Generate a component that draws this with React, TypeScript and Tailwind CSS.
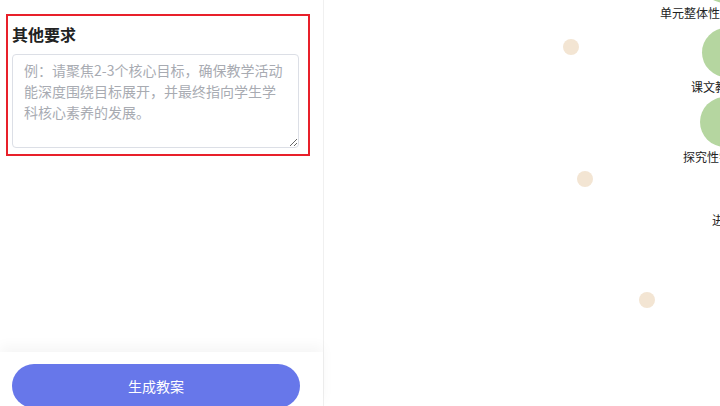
const nodes = [
  { cx: 401, cy: -22, r: 25 },
  { cx: 402.5, cy: 52.5, r: 24.5 },
  { cx: 401, cy: 122, r: 25 },
];

const labels = [
  { x: 336, y: 18, text: "单元整体性教学设计" },
  { x: 367, y: 92, text: "课文教学重点" },
  { x: 359, y: 162, text: "探究性学习活动" },
  { x: 388, y: 225, text: "进阶任务" },
];

const dots = [
  { cx: 247, cy: 47 },
  { cx: 261, cy: 179 },
  { cx: 323, cy: 300 },
];

export default function App() {
  return (
    <div
      className="flex h-[406px] w-[720px] overflow-hidden bg-white"
      style={{ fontFamily: '"Noto Sans CJK SC", "Noto Sans", sans-serif' }}
    >
      {/* Left form panel */}
      <aside className="flex w-[324px] shrink-0 flex-col border-r border-[#f0f0f0] bg-white">
        <div className="flex-1 pt-[14px] pl-[6px]">
          <div className="w-[304px] border-2 border-[#e8202a] px-1 pt-1 pb-[6px]">
            <h3 className="h-7 text-[16px] font-bold leading-7 text-[#222]">其他要求</h3>
            <textarea
              className="mt-[6px] block h-[94px] w-[287px] resize-y rounded border border-[#dcdfe6] px-[11px] py-[5px] text-[14px] leading-[21px] text-[#606266] outline-none placeholder:text-[#a8abb2]"
              placeholder="例：请聚焦2-3个核心目标，确保教学活动能深度围绕目标展开，并最终指向学生学科核心素养的发展。"
            />
          </div>
        </div>
        <div className="h-[54px] bg-white px-3 pt-3 shadow-[0_-6px_12px_rgba(0,0,0,0.04)]">
          <button className="h-11 w-[288px] rounded-full bg-[#6777ea] text-[14px] text-white">
            生成教案
          </button>
        </div>
      </aside>

      {/* Right graph canvas */}
      <div className="relative flex-1">
        <svg width="396" height="406" className="block">
          {dots.map((d, i) => (
            <circle key={i} cx={d.cx} cy={d.cy} r={8} fill="#f3e5d3" />
          ))}
          {nodes.map((n, i) => (
            <circle key={i} cx={n.cx} cy={n.cy} r={n.r} fill="#b5d6a0" />
          ))}
          {labels.map((l, i) => (
            <text key={i} x={l.x} y={l.y} fontSize="12" fill="#222">
              {l.text}
            </text>
          ))}
        </svg>
      </div>
    </div>
  );
}
